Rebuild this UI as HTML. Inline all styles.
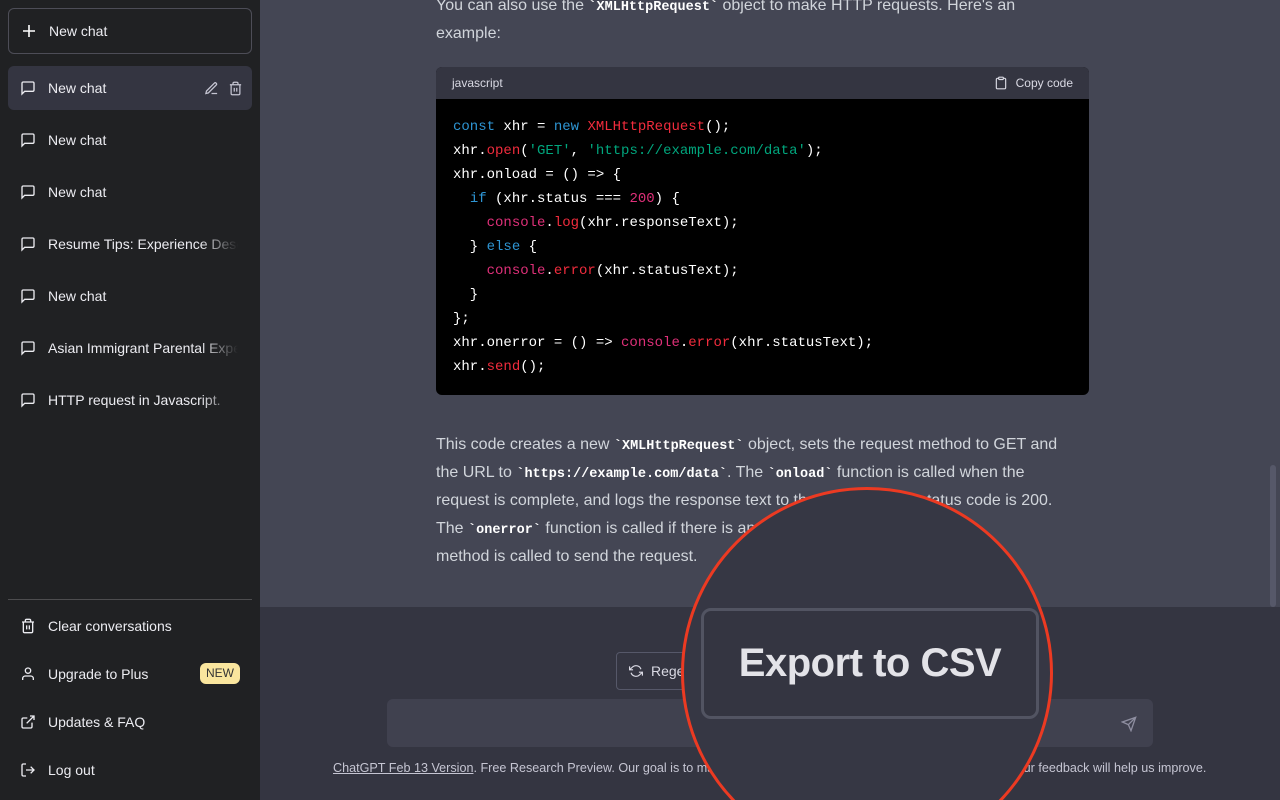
<!DOCTYPE html>
<html><head><meta charset="utf-8"><style>
*{box-sizing:border-box;margin:0;padding:0}
html,body{width:1280px;height:800px;overflow:hidden}
body{background:#444654;font-family:"Liberation Sans",sans-serif}
#w{position:relative;width:1280px;height:800px;overflow:hidden}
.sb{position:absolute;left:0;top:0;width:260px;height:800px;background:#202123;color:#ececf1;font-size:14px}
.nc{position:absolute;left:8px;top:8px;width:244px;height:46px;border:1px solid #4d4d57;border-radius:6px;display:flex;align-items:center;padding-left:12px}
.nc span{margin-left:12px}
.it{position:absolute;left:8px;width:244px;height:44px;display:flex;align-items:center;padding-left:12px;border-radius:6px;white-space:nowrap;overflow:hidden}
.it svg{flex:none}
.it span{margin-left:12px;overflow:hidden;width:190px;-webkit-mask-image:linear-gradient(90deg,#000 80%,transparent);}
.sel{background:#343541}
p.t{position:absolute;left:436px;width:700px;color:#d1d5db;font-size:16px;line-height:28px;white-space:nowrap}
code{font-family:"Liberation Mono",monospace;font-weight:bold;color:#fff;font-size:13.5px;line-height:1}
.cb{position:absolute;left:436px;top:67px;width:653px;height:328px;border-radius:6px;overflow:hidden;background:#000}
.ch{height:32px;background:#343541;color:#d9d9e3;font-size:12px;display:flex;align-items:center;justify-content:space-between;padding:0 16px}
pre{font-family:"Liberation Mono",monospace;font-size:14px;line-height:24px;color:#fff;padding:16px 16px 0 17px}
.k{color:#2e95d3}.r{color:#f22c3d}.g{color:#00a67d}.m{color:#df3079}
.bot{position:absolute;left:260px;top:607px;width:1020px;height:193px;background:#343541}
.sbar{position:absolute;left:1270px;top:465px;width:6px;height:142px;background:#565869;border-radius:3px}
</style></head><body><div id="w">
<div class="sb">
<div class="nc"><svg width="16" height="16" viewBox="0 0 16 16" fill="none" stroke="#fff" stroke-width="1.6"><path d="M8 2v12M2 8h12"/></svg><span>New chat</span></div>
<div class="it sel" style="top:66px"><svg width="16" height="16" viewBox="0 0 24 24" fill="none" stroke="#ececf1" stroke-width="2"><path d="M21 15a2 2 0 0 1-2 2H7l-4 4V5a2 2 0 0 1 2-2h14a2 2 0 0 1 2 2z"/></svg><span style="width:140px;-webkit-mask-image:none">New chat</span>
<svg style="position:absolute;left:196px" width="15" height="15" viewBox="0 0 24 24" fill="none" stroke="#c5c5d2" stroke-width="2"><path d="M12 20h9M16.5 3.5a2.1 2.1 0 0 1 3 3L7 19l-4 1 1-4z"/></svg>
<svg style="position:absolute;left:220px" width="15" height="15" viewBox="0 0 24 24" fill="none" stroke="#c5c5d2" stroke-width="2"><path d="M3 6h18M19 6v14a2 2 0 0 1-2 2H7a2 2 0 0 1-2-2V6M8 6V4a2 2 0 0 1 2-2h4a2 2 0 0 1 2 2v2M10 11v6M14 11v6"/></svg></div>
<div class="it" style="top:118px"><svg width="16" height="16" viewBox="0 0 24 24" fill="none" stroke="#ececf1" stroke-width="2"><path d="M21 15a2 2 0 0 1-2 2H7l-4 4V5a2 2 0 0 1 2-2h14a2 2 0 0 1 2 2z"/></svg><span>New chat</span></div>
<div class="it" style="top:170px"><svg width="16" height="16" viewBox="0 0 24 24" fill="none" stroke="#ececf1" stroke-width="2"><path d="M21 15a2 2 0 0 1-2 2H7l-4 4V5a2 2 0 0 1 2-2h14a2 2 0 0 1 2 2z"/></svg><span>New chat</span></div>
<div class="it" style="top:222px"><svg width="16" height="16" viewBox="0 0 24 24" fill="none" stroke="#ececf1" stroke-width="2"><path d="M21 15a2 2 0 0 1-2 2H7l-4 4V5a2 2 0 0 1 2-2h14a2 2 0 0 1 2 2z"/></svg><span>Resume Tips: Experience Description</span></div>
<div class="it" style="top:274px"><svg width="16" height="16" viewBox="0 0 24 24" fill="none" stroke="#ececf1" stroke-width="2"><path d="M21 15a2 2 0 0 1-2 2H7l-4 4V5a2 2 0 0 1 2-2h14a2 2 0 0 1 2 2z"/></svg><span>New chat</span></div>
<div class="it" style="top:326px"><svg width="16" height="16" viewBox="0 0 24 24" fill="none" stroke="#ececf1" stroke-width="2"><path d="M21 15a2 2 0 0 1-2 2H7l-4 4V5a2 2 0 0 1 2-2h14a2 2 0 0 1 2 2z"/></svg><span>Asian Immigrant Parental Expectations</span></div>
<div class="it" style="top:378px"><svg width="16" height="16" viewBox="0 0 24 24" fill="none" stroke="#ececf1" stroke-width="2"><path d="M21 15a2 2 0 0 1-2 2H7l-4 4V5a2 2 0 0 1 2-2h14a2 2 0 0 1 2 2z"/></svg><span>HTTP request in Javascript.</span></div>
<div style="position:absolute;left:8px;top:599px;width:244px;height:1px;background:#4d4d4f"></div>
<div class="it" style="top:604px"><svg width="16" height="16" viewBox="0 0 24 24" fill="none" stroke="#ececf1" stroke-width="2"><path d="M3 6h18M19 6v14a2 2 0 0 1-2 2H7a2 2 0 0 1-2-2V6M8 6V4a2 2 0 0 1 2-2h4a2 2 0 0 1 2 2v2M10 11v6M14 11v6"/></svg><span style="-webkit-mask-image:none">Clear conversations</span></div>
<div class="it" style="top:652px"><svg width="16" height="16" viewBox="0 0 24 24" fill="none" stroke="#ececf1" stroke-width="2"><path d="M20 21v-2a4 4 0 0 0-4-4H8a4 4 0 0 0-4 4v2"/><circle cx="12" cy="7" r="4"/></svg><span style="-webkit-mask-image:none">Upgrade to Plus</span>
<div style="position:absolute;left:192px;top:11px;width:40px;height:21px;background:#fae69e;border-radius:6px;color:#333;font-size:12px;text-align:center;line-height:21px">NEW</div></div>
<div class="it" style="top:700px"><svg width="16" height="16" viewBox="0 0 24 24" fill="none" stroke="#ececf1" stroke-width="2"><path d="M18 13v6a2 2 0 0 1-2 2H5a2 2 0 0 1-2-2V8a2 2 0 0 1 2-2h6M15 3h6v6M10 14L21 3"/></svg><span style="-webkit-mask-image:none">Updates &amp; FAQ</span></div>
<div class="it" style="top:748px"><svg width="16" height="16" viewBox="0 0 24 24" fill="none" stroke="#ececf1" stroke-width="2"><path d="M9 21H5a2 2 0 0 1-2-2V5a2 2 0 0 1 2-2h4M16 17l5-5-5-5M21 12H9"/></svg><span style="-webkit-mask-image:none">Log out</span></div>
</div>

<p class="t" style="top:-8px">You can also use the <code>`XMLHttpRequest`</code> object to make HTTP requests. Here's an<br>example:</p>
<div class="cb"><div class="ch"><span>javascript</span><span style="display:flex;align-items:center"><svg width="14" height="16" viewBox="0 0 24 24" fill="none" stroke="#d9d9e3" stroke-width="2" style="margin-right:8px"><path d="M16 4h2a2 2 0 0 1 2 2v14a2 2 0 0 1-2 2H6a2 2 0 0 1-2-2V6a2 2 0 0 1 2-2h2"/><rect x="8" y="2" width="8" height="4" rx="1"/></svg>Copy code</span></div>
<pre><span class="k">const</span> xhr = <span class="k">new</span> <span class="r">XMLHttpRequest</span>();
xhr.<span class="r">open</span>(<span class="g">'GET'</span>, <span class="g">'https://example.com/data'</span>);
xhr.onload = () => {
  <span class="k">if</span> (xhr.status === <span class="m">200</span>) {
    <span class="m">console</span>.<span class="r">log</span>(xhr.responseText);
  } <span class="k">else</span> {
    <span class="m">console</span>.<span class="r">error</span>(xhr.statusText);
  }
};
xhr.onerror = () => <span class="m">console</span>.<span class="r">error</span>(xhr.statusText);
xhr.<span class="r">send</span>();</pre></div>
<p class="t" style="top:431px">This code creates a new <code>`XMLHttpRequest`</code> object, sets the request method to GET and<br>the URL to <code>`https://example.com/data`</code>. The <code>`onload`</code> function is called when the<br>request is complete, and logs the response text to the console if the status code is 200.<br>The <code>`onerror`</code> function is called if there is an error, and finally the <code>`send()`</code><br>method is called to send the request.</p>
<div class="bot"></div>
<div class="sbar"></div>
<div style="position:absolute;left:616px;top:652px;width:190px;height:38px;border:1px solid #565869;border-radius:4px;color:#d9d9e3;font-size:14px;display:flex;align-items:center;padding-left:12px;white-space:nowrap;overflow:hidden"><svg width="14" height="14" viewBox="0 0 24 24" fill="none" stroke="#d9d9e3" stroke-width="2"><path d="M1 4v6h6M23 20v-6h-6M20.5 9A9 9 0 0 0 5.6 5.6L1 10m22 4l-4.6 4.4A9 9 0 0 1 3.5 15"/></svg><span style="margin-left:8px">Regenerate response</span></div>
<div style="position:absolute;left:387px;top:699px;width:766px;height:48px;background:#40414f;border-radius:6px"><svg style="position:absolute;right:16px;top:17px" width="16" height="16" viewBox="0 0 24 24" fill="none" stroke="#8e8ea0" stroke-width="2"><path d="M22 2L11 13M22 2l-7 20-4-9-9-4z"/></svg></div>
<div style="position:absolute;left:333px;top:761px;width:900px;font-size:12.6px;color:#c5c5d2;white-space:nowrap"><u>ChatGPT Feb 13 Version</u>. Free Research Preview. Our goal is to make AI systems more natural and safe to interact with. Your feedback will help us improve.</div>

<div style="position:absolute;left:681px;top:487px;width:372px;height:313px;overflow:hidden">
<div style="position:absolute;left:0;top:0;width:372px;height:372px;border-radius:50%;background:#363744;border:3px solid #ec3a22;overflow:hidden">
<div style="position:absolute;left:17px;top:118px;width:338px;height:111px;border:3px solid #525462;border-radius:10px;background:#343541;color:#e3e3e8;font-size:40px;font-weight:bold;display:flex;align-items:center;justify-content:center;letter-spacing:-0.5px">Export to CSV</div>
</div></div>
</div></body></html>
